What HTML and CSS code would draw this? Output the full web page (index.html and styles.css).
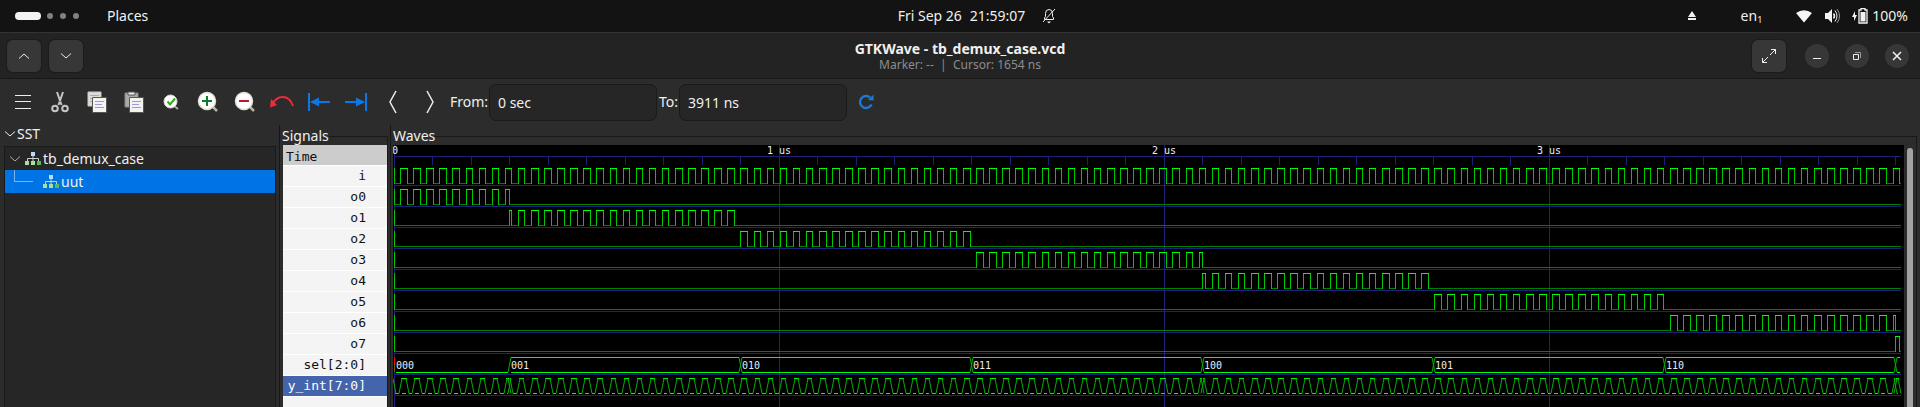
FILE: index.html
```html
<!DOCTYPE html>
<html lang="en">
<head>
<meta charset="utf-8">
<title>GTKWave - tb_demux_case.vcd</title>
<link rel="stylesheet" href="styles.css">
</head>
<body>
<header class="topbar">
  <div class="topbar-left">
    <button class="workspaces" aria-label="Workspaces"><span class="pill"></span><span class="dot"></span><span class="dot"></span><span class="dot"></span></button>
    <button class="flat">Places</button>
  </div>
  <button class="flat clock"><span>Fri Sep 26</span><span>21:59:07</span></button>
  <div class="topbar-right">
    <svg class="bell" width="14" height="16" viewBox="0 0 14 16" fill="none" stroke="#f0f0f0"><path d="M2.500 11.500V10L3.500 8.500V5.500Q3.500 1.500 7 1.500T10.500 5.500V8.500L11.500 10V11.500ZM1 14L13 1"/><path d="M5 13.500H9L7 15.500Z" fill="#f0f0f0" stroke="none"/></svg>
    <div class="status">
      <svg class="eject" width="10" height="10" viewBox="0 0 10 10" fill="#f2f2f2"><path d="M5 0L9 6H1ZM1 7H9V9H1Z"/></svg>
      <span class="lang">en<sub>1</sub></span>
      <svg class="wifi" width="16" height="13" viewBox="0 0 16 13" fill="#f4f4f4"><path d="M0 3Q8-2.500 16 3L8.500 12Q8 12.600 7.500 12Z"/></svg>
      <svg class="volume" width="16" height="16" viewBox="0 0 16 16" fill="none" stroke="#f4f4f4"><path d="M0 5H3L7 1V15L3 11H0Z" fill="#f4f4f4" stroke="none"/><path d="M8.500 5.500Q10.500 8 8.500 10.500" stroke-width="1.500"/><path d="M10 2.500Q14 8 10 13.500"/><path d="M12 1Q17 8 12 15" stroke="#999"/></svg>
      <svg class="battery" width="16" height="16" viewBox="0 0 16 16"><path d="M3 3L0 9H2V13L5 7H3Z" fill="#f4f4f4"/><path d="M9 .5H13V2H15V15H7V2H9Z" fill="none" stroke="#f4f4f4" stroke-width="1.300"/><path d="M8.500 4H13.500V13.500H8.500Z" fill="#f4f4f4"/></svg>
      <span>100%</span>
    </div>
  </div>
</header>

<div class="titlebar">
  <div class="title-left">
    <button class="square" aria-label="Previous"><svg width="12" height="8" viewBox="0 0 12 8"><path d="M1 6.500L6 2L11 6.500"/></svg></button>
    <button class="square" aria-label="Next"><svg width="12" height="8" viewBox="0 0 12 8"><path d="M1 1.500L6 6L11 1.500"/></svg></button>
  </div>
  <div class="title-text">
    <h1>GTKWave - tb_demux_case.vcd</h1>
    <p>Marker: -- &nbsp;|&nbsp; Cursor: 1654 ns</p>
  </div>
  <div class="title-right">
    <button class="square" aria-label="Full screen"><svg width="16" height="16" viewBox="0 0 16 16"><path d="M9 7L14.500 1.500M10 1.500H14.500V6M7 9L1.500 14.500M1.500 10V14.500H6"/></svg></button>
    <button class="round" aria-label="Minimize"><svg width="12" height="12" viewBox="0 0 12 12"><path d="M2 8.500H10"/></svg></button>
    <button class="round" aria-label="Restore"><svg width="12" height="12" viewBox="0 0 12 12"><path d="M4 2.500H9.500V8"/><path d="M2.500 4.500H7.500V9.500H2.500Z"/></svg></button>
    <button class="round" aria-label="Close"><svg width="12" height="12" viewBox="0 0 12 12"><path d="M2 2L10 10M10 2L2 10" stroke-width="1.600"/></svg></button>
  </div>
</div>

<div class="toolbar">
  <button class="tool" aria-label="Menu"><svg width="18" height="18" viewBox="0 0 18 18" stroke="#eee"><path d="M1 2.500H17M1 8.500H17M1 15.500H17"/></svg></button>
  <button class="tool" aria-label="Cut"><svg width="18" height="22" viewBox="0 0 18 22" fill="none" stroke="#c4c6c4" stroke-width="2"><path d="M6 1L10.500 14M12 1L7.500 14"/><circle cx="4" cy="17.500" r="2.800"/><circle cx="14" cy="17.500" r="2.800"/><path d="M9 10V11" stroke="#555" stroke-width="1"/></svg></button>
  <button class="tool" aria-label="Copy"><svg width="20" height="22" viewBox="0 0 20 22"><path d="M1 1H14V15H1Z" fill="#deded8" stroke="#c8c8c2"/><path d="M3 4.500H12M3 7.500H6M3 10.500H6" stroke="#aaa"/><path d="M5.500 6.500H19.500V21.500H5.500Z" fill="#f2f2f0" stroke="#555"/><path d="M8 10.500H17M8 13.500H15M8 16.500H17" stroke="#9c98e4"/></svg></button>
  <button class="tool" aria-label="Paste"><svg width="20" height="22" viewBox="0 0 20 22"><path d="M1 2H14V16H1Z" fill="#aaaaa6" stroke="#888"/><path d="M4 1H11V4H4Z" fill="#eee" stroke="#555"/><path d="M5.500 6.500H19.500V21.500H5.500Z" fill="#f2f2f0" stroke="#555"/><path d="M8 10.500H17M8 13.500H15M8 16.500H17" stroke="#9c98e4"/></svg></button>
  <button class="tool" aria-label="Zoom fit"><svg width="16" height="16" viewBox="0 0 16 16"><path d="M10 11L15 15" stroke="#aaa79c" stroke-width="2"/><circle cx="7.500" cy="7.500" r="6.500" fill="#fff" stroke="#d8d8d0"/><path d="M4.500 7.500L7 10.500L12 4.500" fill="none" stroke="#3ba626" stroke-width="2"/></svg></button>
  <button class="tool" aria-label="Zoom in"><svg width="22" height="22" viewBox="0 0 22 22"><path d="M15 15L20 20" stroke="#b5b2a6" stroke-width="2.500"/><circle cx="10" cy="10" r="8.500" fill="#fff" stroke="#e2e0d4" stroke-width="1.500"/><path d="M5 10H15M10 5V15" stroke="#0c7c2a" stroke-width="2"/></svg></button>
  <button class="tool" aria-label="Zoom out"><svg width="22" height="22" viewBox="0 0 22 22"><path d="M15 15L20 20" stroke="#b5b2a6" stroke-width="2.500"/><circle cx="10" cy="10" r="8.500" fill="#fff" stroke="#e2e0d4" stroke-width="1.500"/><path d="M5 10H15" stroke="#c4142c" stroke-width="2"/></svg></button>
  <button class="tool" aria-label="Zoom undo"><svg width="26" height="16" viewBox="0 0 26 16"><path d="M4 9Q8 3 13.500 3Q21 3 24 12" fill="none" stroke="#ef2b3d" stroke-width="2"/><path d="M1 13.500L2 5L8 11Z" fill="#ef2b3d"/></svg></button>
  <button class="tool" aria-label="Zoom to start"><svg width="24" height="18" viewBox="0 0 24 18" fill="#0a78e6"><path d="M1 0H3V18H1ZM3 9L12 4.500V8H23V10H12V13.500Z"/></svg></button>
  <button class="tool" aria-label="Zoom to end"><svg width="24" height="18" viewBox="0 0 24 18" fill="#0a78e6"><path d="M21 0H23V18H21ZM21 9L12 4.500V8H1V10H12V13.500Z"/></svg></button>
  <button class="tool" aria-label="Previous edge"><svg width="10" height="24" viewBox="0 0 10 24" fill="none" stroke="#eee" stroke-width="1.500"><path d="M8 1L2 12L8 23"/></svg></button>
  <button class="tool" aria-label="Next edge"><svg width="10" height="24" viewBox="0 0 10 24" fill="none" stroke="#eee" stroke-width="1.500"><path d="M2 1L8 12L2 23"/></svg></button>
  <label for="from">From:</label><input id="from" type="text" value="0 sec">
  <label class="to" for="to">To:</label><input id="to" type="text" value="3911 ns">
  <button class="tool reload" aria-label="Reload"><svg width="16" height="16" viewBox="0 0 16 16"><path d="M13.500 10.500A6 6 0 1 1 12 3.500" fill="none" stroke="#1c7ad4" stroke-width="2.400"/><path d="M10 6L15.500 6.500V.5Z" fill="#1c7ad4"/></svg></button>
</div>

<main class="panes">
  <section class="sst">
    <h2><svg width="12" height="8" viewBox="0 0 12 8"><path d="M1 1.500L6 6L11 1.500"/></svg>SST</h2>
    <ul class="tree">
      <li class="node"><svg class="twist" width="12" height="8" viewBox="0 0 12 8"><path d="M1 1.500L6 6L11 1.500"/></svg><svg width="16" height="14" viewBox="0 0 16 14"><use href="#hier"/></svg><span>tb_demux_case</span></li>
      <li class="node selected"><svg class="branch" width="20" height="23" viewBox="0 0 20 23"><path d="M.5 0V11.500H19" fill="none" stroke="#7db5f2"/></svg><svg width="16" height="14" viewBox="0 0 16 14"><g id="hier"><path d="M6 0H10V4H6Z" fill="#bcdcfc"/><path d="M8 4V6M2.500 9V6.500H13.500V9M8 6V9" fill="none" stroke="#ccc"/><path d="M0 9H4V13H0ZM6 9H10V13H6Z" fill="#a8e098"/><path d="M12 9H16V13H12Z" fill="#5cb85c"/></g></svg><span>uut</span></li>
    </ul>
  </section>
  <section class="signals">
    <h2>Signals</h2>
    <ul class="names">
      <li class="time">Time</li>
      <li>i</li><li>o0</li><li>o1</li><li>o2</li><li>o3</li><li>o4</li><li>o5</li><li>o6</li><li>o7</li>
      <li>sel[2:0]</li><li class="picked">y_int[7:0]</li><li></li>
    </ul>
  </section>
  <section class="waves">
    <h2>Waves</h2>
    <div class="wave-row">
      <svg id="plot" role="img" aria-label="Waveforms"></svg>
      <div class="scroll"><div class="thumb"></div></div>
    </div>
  </section>
</main>
<script src="waves.js"></script>
</body>
</html>
```
FILE: styles.css
```css
* { box-sizing: border-box; }
body {
  margin: 0; height: 100vh; overflow: hidden;
  display: flex; flex-direction: column;
  background: #2c2c2c; color: #f0f0f0;
  font: 14px/20px "Noto Sans", sans-serif;
}
h1, h2, p, ul { margin: 0; padding: 0; font: inherit; }
ul { list-style: none; }
button { border: 0; padding: 0; margin: 0; background: none; color: inherit; font: inherit; }
svg { display: block; flex: none; }

.topbar {
  flex: none; height: 33px; padding: 0 12px 0 15px;
  display: grid; grid-template-columns: 1fr auto 1fr; align-items: center;
  background: #131313; border-bottom: 1px solid #333;
}
.topbar-left, .topbar-right, .status, .workspaces, .clock { display: flex; align-items: center; }
.topbar-left { gap: 28px; }
.workspaces { gap: 7px; }
.pill { width: 26px; height: 8px; border-radius: 4px; background: #f2f2f2; margin-right: -1px; }
.dot { width: 6px; height: 6px; border-radius: 3px; background: #828282; }
.clock { gap: 8px; }
.topbar-right { justify-content: space-between; padding-left: 17px; }
.lang { margin: 0 34px 0 44px; }
.lang sub { font-size: 9px; line-height: 1; vertical-align: -2px; }
.volume { margin: 0 11px 0 13px; }
.battery { margin-right: 4px; }

.titlebar {
  flex: none; height: 46px; padding: 0 11px 0 7px;
  display: grid; grid-template-columns: 1fr auto 1fr; align-items: center;
  background: #232323; border-bottom: 1px solid #171717;
}
.title-left, .title-right { display: flex; align-items: center; }
.title-left { gap: 8px; }
.title-right { justify-content: flex-end; gap: 16px; }
.title-text { text-align: center; padding-left: 4px; }
.title-text h1 { font-weight: 700; line-height: 18px; }
.title-text p { font-size: 12px; line-height: 14px; color: #8c8c8c; }
.square, .round { display: flex; align-items: center; justify-content: center; background: #373737; }
.square { width: 34px; height: 32px; border-radius: 6px; box-shadow: 0 0 0 1px #1b1b1b; }
.round { width: 24px; height: 24px; border-radius: 12px; }
.title-right .square { margin-right: 3px; }
.square path, .round path, h2 path, .twist path { fill: none; stroke: #eee; }
.round path:first-child:nth-last-child(2) { stroke: #999; }
.twist path { stroke: #aaa; }

.toolbar { flex: none; display: flex; align-items: center; height: 46px; padding-left: 4px; }
.tool { width: 37px; height: 37px; display: flex; align-items: center; justify-content: center; }
.toolbar label { margin-left: 2px; width: 39px; }
.toolbar .to { width: 20px; }
.toolbar input {
  width: 168px; height: 37px; padding: 0 8px;
  background: #262626; color: inherit; font: inherit;
  border: 1px solid #1a1a1a; border-radius: 7px;
}

.panes { flex: 1; min-height: 0; display: grid; grid-template-columns: 279px 111px 1fr; }
.panes section { display: flex; flex-direction: column; min-width: 0; min-height: 0; }
.sst { padding: 0 3px 0 4px; }
.sst h2 { display: flex; align-items: center; gap: 1px; height: 21px; padding-bottom: 4px; }
.tree { flex: 1; background: #262626; border: 1px solid #191919; border-bottom: 0; }
.node { display: flex; align-items: center; height: 23px; padding-left: 4px; gap: 2px; }
.node .twist { margin-right: 2px; }
.node.selected { background: #0073e5; padding-left: 9px; }
.branch { margin-right: 7px; }

.signals { border-left: 1px solid #171717; padding: 0 2px; }
.signals h2, .waves h2 { display: flex; height: 20px; padding-top: 2px; line-height: 18px; }
.signals h2::after, .waves h2::after { content: ""; flex: 1; margin-top: 9px; border: 1px solid #191919; border-width: 1px 1px 0 0; }
.names { flex: 1; min-height: 0; overflow: hidden; margin-left: 1px; background: #fff; border-right: 1px solid #191919;
  font: 13px/20px "DejaVu Sans Mono", monospace; color: #111; }
.names li { height: 21px; border-bottom: 1px solid #fff; padding: 0 21px 0 3px; background: #f4f4f4; background-clip: padding-box; text-align: right; white-space: pre; }
.names .time { background-color: #ccc; text-align: left; line-height: 24px; }
.names .picked { background-color: #4464ac; color: #fff; }

.waves { border-left: 1px solid #171717; padding: 0 3px 0 2px; }
.wave-row { flex: 1; min-height: 0; display: flex; border-right: 1px solid #191919; }
#plot { flex: 1; min-width: 0; height: 100%; background: #000; }
#plot text { font: 10px "DejaVu Sans Mono", monospace; fill: #eee; }
#plot .line { fill: none; shape-rendering: crispEdges; }
#plot .slant { fill: none; stroke: #00b000; }
.scroll { width: 12px; padding: 3px 3px 0; }
.thumb { height: 100%; background: #a4a2a2; border-radius: 3px 3px 0 0; }
```
FILE: waves.js
```js
const END = 3911, HALF = 17, ROW = 21;
const SEL = [0, 300, 900, 1500, 2100, 2700, 3300, 3900];
const plot = document.getElementById('plot');

// Intervals inside [from, to] during which the input clock is high.
function pulses(from, to) {
  const out = [];
  for (let t = HALF; t < END; t += 2 * HALF) {
    const a = Math.max(t, from), b = Math.min(t + HALF, to);
    if (b > a) out.push([a, b]);
  }
  return out;
}

function draw() {
  const width = plot.clientWidth || plot.getBoundingClientRect().width;
  const height = plot.clientHeight || plot.getBoundingClientRect().height;
  const scale = (width - 5) / END;
  const X = t => 1 + Math.floor(t * scale);
  const right = X(END) + 1;
  const high = r => 23 + ROW * r, low = r => 38 + ROW * r;
  const box = { grid: '', dim: '', bright: '', edge: '', slant: '' };
  const h = (x1, x2, y) => x2 > x1 ? `M${x1} ${y + .5}H${x2}` : '';
  const v = (x, y1, y2) => `M${x + .5} ${y1}V${y2}`;
  let text = '';
  const label = (x, y, s) => { text += `<text x="${x}" y="${y}">${s}</text>`; };

  box.grid += h(1, right, 11);
  for (let r = 0; r < 11; r++) box.grid += h(1, right, 40 + ROW * r);
  for (let t = 0; t < END; t += 100) box.grid += t % 1000 ? v(X(t), 11, 20) : v(X(t), 0, height);
  label(-1, 9, '0');
  for (let n = 1; n < 4; n++) label(X(n * 1000) - 12, 9, n + ' us');

  const rows = [pulses(0, END)];
  SEL.forEach((t, n) => rows.push(pulses(t, SEL[n + 1] || END)));
  rows.forEach((list, r) => {
    let at = 1;
    box.edge += v(1, high(r), low(r) + 1);
    for (const [a, b] of list) {
      box.dim += h(at, X(a), low(r));
      box.bright += h(X(a), X(b) + 1, high(r));
      box.edge += v(X(a), high(r), low(r) + 1) + v(X(b), high(r), low(r) + 1);
      at = X(b);
    }
    box.dim += h(at, right, low(r));
  });

  // Bus rows: zero is a single bottom rail, any other value has two rails.
  const rise = (x, r) => `M${x - 1} ${low(r) + .5}L${x + 2} ${high(r) + .5}`;
  const fall = (x, r) => `M${x - 1} ${high(r) + .5}L${x + 2} ${low(r) + .5}`;
  SEL.forEach((t, n) => {
    const a = X(t) + 2, b = (SEL[n + 1] ? X(SEL[n + 1]) : right) - 1;
    if (n) box.bright += h(a, b, high(9));
    box.bright += h(a, b, low(9));
    if (n) box.slant += rise(X(t), 9);
    if (n > 1) box.slant += fall(X(t), 9);
    if (n < 7) label(X(t) + 2, 224, n.toString(2).padStart(3, '0'));
  });
  let at = 2;
  SEL.forEach((t, n) => {
    for (const [a, b] of pulses(t, SEL[n + 1] || END)) {
      box.bright += h(at, X(a) - 1, low(10)) + h(X(a) + 2, X(b) - 1, low(10)) + h(X(a) + 1, X(b), high(10));
      box.slant += rise(X(a), 10) + fall(X(b), 10);
      at = X(b) + 2;
    }
  });
  box.slant += fall(1, 10);

  const line = (d, c) => `<path class="line" d="${d}" stroke="${c}"/>`;
  plot.innerHTML = line(box.grid, '#202078') + line(box.dim, '#008000') + line(box.edge, '#00c800') +
    line(box.bright, '#00ff00') + `<path class="slant" d="${box.slant}"/>` +
    line(v(1, high(9), high(9) + 7), '#ff0000') + line(v(1, high(9) + 7, low(9)), '#806000') + text;
}

draw();
window.addEventListener('resize', draw);
```
